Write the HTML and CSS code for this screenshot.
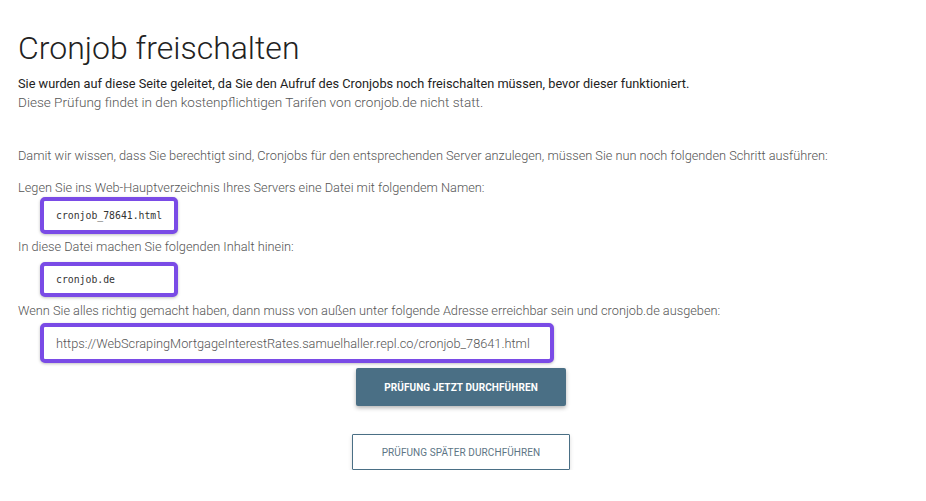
FILE: index.html
```html
<!DOCTYPE html>
<html lang="de">
<head>
<meta charset="utf-8">
<title>Cronjob freischalten</title>
<link rel="stylesheet" href="styles.css">
</head>
<body>
<main class="page">
  <h1 class="title">Cronjob freischalten</h1>
  <p class="lead">Sie wurden auf diese Seite geleitet, da Sie den Aufruf des Cronjobs noch freischalten müssen, bevor dieser funktioniert.</p>
  <p class="note">Diese Prüfung findet in den kostenpflichtigen Tarifen von cronjob.de nicht statt.</p>

  <p class="text intro">Damit wir wissen, dass Sie berechtigt sind, Cronjobs für den entsprechenden Server anzulegen, müssen Sie nun noch folgenden Schritt ausführen:</p>

  <p class="text">Legen Sie ins Web-Hauptverzeichnis Ihres Servers eine Datei mit folgendem Namen:</p>
  <div class="box box-code box-file"><code>cronjob_78641.html</code></div>

  <p class="text">In diese Datei machen Sie folgenden Inhalt hinein:</p>
  <div class="box box-code box-content"><code>cronjob.de</code></div>

  <p class="text">Wenn Sie alles richtig gemacht haben, dann muss von außen unter folgende Adresse erreichbar sein und cronjob.de ausgeben:</p>
  <div class="box box-url">https://WebScrapingMortgageInterestRates.samuelhaller.repl.co/cronjob_78641.html</div>

  <div class="actions">
    <button class="btn btn-primary" type="button">Prüfung jetzt durchführen</button>
    <button class="btn btn-outline" type="button">Prüfung später durchführen</button>
  </div>
</main>
</body>
</html>
```

FILE: styles.css
```css
* { box-sizing: border-box; }

html, body {
  margin: 0;
  padding: 0;
  background: #ffffff;
}

body {
  font-family: Roboto, "Liberation Sans", Arial, sans-serif;
  color: #666666;
  font-size: 13px;
}

.page {
  padding: 26px 18px 0 18px;
  display: flex;
  flex-direction: column;
  align-items: flex-start;
}

.title {
  margin: 0 0 4px 0;
  font-size: 32px;
  font-weight: 300;
  line-height: 44px;
  color: #222222;
}

.lead {
  margin: 0;
  font-size: 12.75px;
  line-height: 19px;
  color: #222222;
}

.note {
  margin: 0;
  font-weight: 300;
  font-size: 13.55px;
  line-height: 19px;
  color: #555555;
}

.text {
  margin: 0;
  font-weight: 300;
  font-size: 12.75px;
  line-height: 19px;
  color: #555555;
}

.intro {
  margin-top: 34px;
  margin-bottom: 13px;
}

.box {
  margin-left: 22px;
  background: #ffffff;
  border: 4px solid #7a4be6;
  border-radius: 5px;
  box-shadow: 0 1px 3px rgba(0, 0, 0, 0.25);
  display: flex;
  align-items: center;
}

.box-code {
  width: 138px;
  padding: 0 12px;
}

.box-file {
  height: 37px;
  margin-top: 0;
  margin-bottom: 3px;
}

.box-content {
  height: 35px;
  margin-top: 6px;
  margin-bottom: 4px;
}

.box-code code {
  font-family: "DejaVu Sans Mono", "Liberation Mono", monospace;
  font-size: 9.8px;
  color: #333333;
}

.box-url {
  height: 40px;
  margin-top: 3px;
  padding: 0 20px 0 12px;
  font-weight: 300;
  color: #555555;
  font-size: 12.75px;
}

.actions {
  align-self: stretch;
  display: flex;
  flex-direction: column;
  align-items: center;
  gap: 28px;
  margin-top: 5px;
  margin-right: 4px;
}

.btn {
  font-family: Roboto, "Liberation Sans", Arial, sans-serif;
  text-transform: uppercase;
  font-size: 10px;
  letter-spacing: 0.1px;
  cursor: pointer;
}

.btn-primary {
  width: 210px;
  height: 38px;
  background: #4a6f85;
  color: #ffffff;
  border: none;
  border-radius: 2px;
  box-shadow: 0 2px 4px rgba(0, 0, 0, 0.3);
  font-weight: 700;
}

.btn-outline {
  width: 218px;
  height: 36px;
  background: #ffffff;
  color: #5d7585;
  border: 1px solid #4a6f85;
  border-radius: 1px;
  box-shadow: 0 2px 4px rgba(0, 0, 0, 0.15);
  font-weight: 400;
}
```
